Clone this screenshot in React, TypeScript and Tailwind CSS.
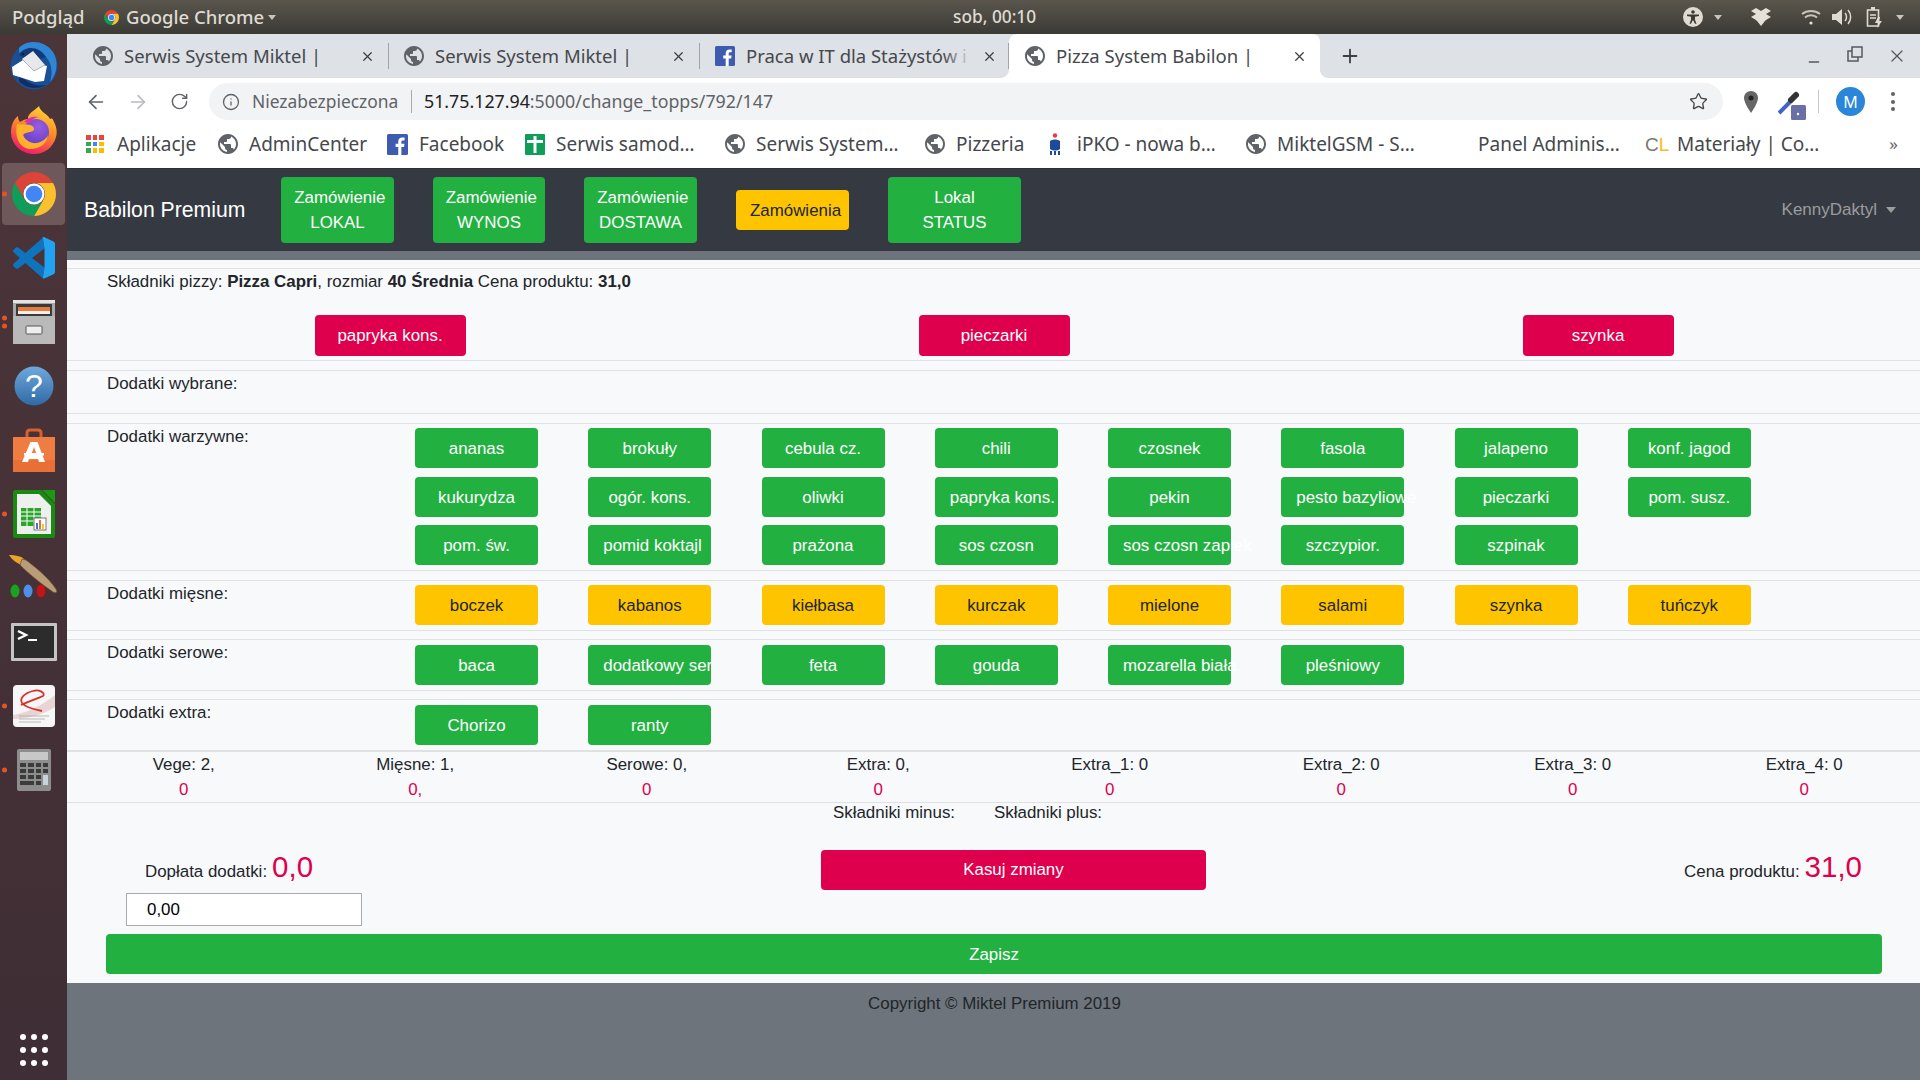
import { ArrowLeft, ArrowRight, Info, Minus, Plus, RotateCw, Star, X } from "lucide-react";

const ubuntu = "font-['Noto_Sans','Open_Sans',sans-serif]";

const warzywne = [
  "ananas", "brokuły", "cebula cz.", "chili", "czosnek", "fasola", "jalapeno", "konf. jagod",
  "kukurydza", "ogór. kons.", "oliwki", "papryka kons.", "pekin", "pesto bazyliowe", "pieczarki", "pom. susz.",
  "pom. św.", "pomid koktajl", "prażona", "sos czosn", "sos czosn zapiek", "szczypior.", "szpinak",
];
const miesne = ["boczek", "kabanos", "kiełbasa", "kurczak", "mielone", "salami", "szynka", "tuńczyk"];
const serowe = ["baca", "dodatkowy ser", "feta", "gouda", "mozarella biała", "pleśniowy"];
const extra = ["Chorizo", "ranty"];
const stats = [
  ["Vege: 2,", "0"], ["Mięsne: 1,", "0,"], ["Serowe: 0,", "0"], ["Extra: 0,", "0"],
  ["Extra_1: 0", "0"], ["Extra_2: 0", "0"], ["Extra_3: 0", "0"], ["Extra_4: 0", "0"],
];

function Globe({ size = 20 }: { size?: number }) {
  return (
    <svg width={size} height={size} viewBox="2 2 20 20" className="shrink-0">
      <path fill="#5f6368" d="M12 2C6.48 2 2 6.48 2 12s4.48 10 10 10 10-4.48 10-10S17.52 2 12 2zm-1 17.93c-3.95-.49-7-3.85-7-7.93 0-.62.08-1.21.21-1.79L9 15v1c0 1.1.9 2 2 2v1.93zm6.9-2.54c-.26-.81-1-1.39-1.9-1.39h-1v-3c0-.55-.45-1-1-1H8v-2h2c.55 0 1-.45 1-1V7h2c1.1 0 2-.9 2-2v-.41c2.93 1.19 5 4.06 5 7.41 0 2.08-.8 3.97-2.1 5.39z" />
    </svg>
  );
}

function Fb({ size = 20 }: { size?: number }) {
  return (
    <svg width={size} height={size} viewBox="0 0 20 20" className="shrink-0">
      <rect width="20" height="20" rx="1.5" fill="#3f5bb0" />
      <path fill="#fff" d="M13.7 20v-7.6h2.5l.4-3h-2.9V7.6c0-.9.3-1.4 1.5-1.4h1.5V3.5c-.3 0-1.2-.1-2.2-.1-2.2 0-3.8 1.4-3.8 3.9v2.1H8.2v3h2.5V20z" />
    </svg>
  );
}

function Chrome({ size = 44 }: { size?: number }) {
  return (
    <svg width={size} height={size} viewBox="2 2 44 44" className="shrink-0">
      <path fill="#db4437" d="M4.95 13A22 22 0 0 1 43.05 13L24 13A11 11 0 0 0 14.47 29.5Z" />
      <path fill="#fbc02d" d="M43.05 13A22 22 0 0 1 24 46L33.53 29.5A11 11 0 0 0 24 13Z" />
      <path fill="#0f9d58" d="M24 46A22 22 0 0 1 4.95 13L14.47 29.5A11 11 0 0 0 33.53 29.5Z" />
      <circle cx="24" cy="24" r="10.5" fill="#fff" />
      <circle cx="24" cy="24" r="8.3" fill="#4285f4" />
    </svg>
  );
}

function Thunderbird() {
  return (
    <svg width="48" height="50" viewBox="0 0 48 50">
      <circle cx="24" cy="25" r="23.5" fill="#1b4f94" />
      <path fill="#2f86d6" d="M9 7C17-2 35-1 43 11c6 10 4 22-3 30 3-10 2-20-6-27C27 8 18 7 9 12z" />
      <path fill="#123a78" d="M9 14c3-5 7-7 12-7 6 0 11 3 15 9L20 20z" />
      <path fill="#0f2f66" d="M9 32c6 9 15 14 27 12-8 5-20 4-27-4z" />
      <path fill="#fff" d="M2 26 13 19l17 4 7 2-3 15-9 1-22-7z" />
      <path fill="#e6e8ec" d="M12 18 23 10l12 14-11 6z" />
      <path fill="none" stroke="#9aa0a6" strokeWidth="0.8" d="M12 18l12 12 11-6" />
      <circle cx="13" cy="13" r="1.3" fill="#0b1c3c" />
    </svg>
  );
}

function Firefox() {
  return (
    <svg width="46" height="48" viewBox="0 0 46 48">
      <defs>
        <linearGradient id="fx" x1="0.7" y1="0" x2="0.3" y2="1">
          <stop offset="0" stopColor="#ffd53a" />
          <stop offset="0.45" stopColor="#ff8a26" />
          <stop offset="1" stopColor="#f0146e" />
        </linearGradient>
        <radialGradient id="fxp" cx="0.6" cy="0.3" r="0.8">
          <stop offset="0" stopColor="#9a5ce0" />
          <stop offset="1" stopColor="#5d3ec4" />
        </radialGradient>
      </defs>
      <path fill="url(#fx)" d="M28 0c1 6 9 8 11 13 2-1 3 0 3.5 2 3 5 4 11 2.500 16C42 42 33 48 23 48 10 48 0 38 0 26 0 20 2 14 7 10c0 3 1 5 2 6 3-2 6-3 8-3-1-5 6-8 11-13z" />
      <circle cx="25" cy="26" r="13" fill="url(#fxp)" />
      <path fill="#ffb12b" d="M6 18c5 1 9 0 13 1 4 1 5 4 3 6-4 2-8 1-10 4 2 5 8 9 14 8 5-1 9-4 11-8-1 9-9 14-17 14C10 43 3 33 6 18z" />
      <path fill="#e02fa0" d="M13 16c3-4 9-6 14-5-4 1-7 3-8 6z" />
    </svg>
  );
}

function VsCode() {
  return (
    <svg width="42" height="42" viewBox="0 0 100 100">
      <path fill="#0f74bd" d="M71 2 29.400 38 12.200 25c-1.600-1.200-3.800-1.100-5.300.2L1.400 30.300c-1.800 1.700-1.800 4.500 0 6.200L16.300 50 1.400 63.600c-1.800 1.700-1.800 4.500 0 6.200l5.500 5c1.500 1.300 3.700 1.400 5.300.2l17.200-13L71 98 75 72.700 45.100 50 75 27.300z" />
      <path fill="#21a3f1" d="M96.500 10.800 75.900.9c-2.400-1.200-5.200-.7-7.100 1.200L71 2l4 25.300v45.400L71 98l-2.200-.9c1.900 1.900 4.700 2.400 7.100 1.200l20.600-9.900c2.200-1 3.500-3.200 3.500-5.600V16.400c0-2.400-1.400-4.600-3.500-5.600z" />
    </svg>
  );
}

function Cabinet() {
  return (
    <svg width="42" height="44" viewBox="0 0 42 44">
      <rect x="0" y="0" width="42" height="44" rx="2" fill="#a9a9a9" />
      <rect x="0" y="0" width="42" height="3" fill="#e4e4e4" />
      <rect x="3" y="4" width="36" height="12" fill="#3a3a3a" />
      <rect x="5" y="7" width="32" height="4" fill="#e8783c" />
      <rect x="5" y="11" width="32" height="3" fill="#f4f0e8" />
      <rect x="0" y="16" width="42" height="28" fill="#b9b9b9" />
      <rect x="13" y="26" width="16" height="8" rx="1" fill="#eeeeee" stroke="#555" />
    </svg>
  );
}

function Help() {
  return (
    <svg width="40" height="40" viewBox="0 0 40 40">
      <defs>
        <linearGradient id="hp" x1="0" y1="0" x2="0" y2="1">
          <stop offset="0" stopColor="#6fa8dc" />
          <stop offset="1" stopColor="#2f6aa5" />
        </linearGradient>
      </defs>
      <circle cx="20" cy="20" r="19.500" fill="url(#hp)" />
      <text x="20" y="31" textAnchor="middle" fontSize="32" fill="#fff" fontFamily="Liberation Sans, sans-serif">?</text>
    </svg>
  );
}

function Software() {
  return (
    <svg width="42" height="44" viewBox="0 0 42 44">
      <path fill="none" stroke="#d8602f" strokeWidth="3" d="M14 12V5c0-2 1-3 3-3h8c2 0 3 1 3 3v7" />
      <rect y="9" width="42" height="35" fill="#ef7d41" />
      <rect y="32" width="42" height="12" fill="#e86f35" />
      <path fill="#fff" d="M17.500 14h7l7.500 20h-6l-1-3h-9l-1 3h-6zm3.500 5-2.500 7h5z" />
      <rect x="11" y="25" width="20" height="2.500" fill="#fff" />
    </svg>
  );
}

function Sheet() {
  return (
    <svg width="42" height="48" viewBox="0 0 42 48">
      <path fill="#1a8a12" d="M2 0h26l14 14v32c0 1-1 2-2 2H2c-1 0-2-1-2-2V2C0 1 1 0 2 0z" />
      <path fill="#eef0ee" d="M4 4h22l12 12v28H4z" />
      <path fill="#1a9a12" d="M29 0l13 13V0z" />
      <g fill="#2aa52a">
        <rect x="8" y="18" width="20" height="18" />
      </g>
      <g stroke="#fff" strokeWidth="1">
        <path d="M8 22h20M8 26h20M8 31h20M14 18v18M21 18v18" />
      </g>
      <rect x="21" y="28" width="12" height="12" fill="#fff" stroke="#777" />
      <rect x="23" y="33" width="2" height="6" fill="#2f7fd0" />
      <rect x="26" y="30" width="2" height="9" fill="#e86f35" />
      <rect x="29" y="34" width="2" height="5" fill="#f1c232" />
    </svg>
  );
}

function Brush() {
  return (
    <svg width="50" height="46" viewBox="0 0 50 46">
      <path fill="#e8a52a" d="M0 0c6 0 12 1 15 4l-3 6C8 8 3 5 0 0z" />
      <path fill="#b99d78" stroke="#6d4a2a" strokeWidth="0.7" d="M13 4l4 1c8 6 22 17 30 29 2 3 0 5-3 3C32 29 19 18 11 10z" />
      <ellipse cx="6" cy="36" rx="4.500" ry="6.500" fill="#19a31f" />
      <ellipse cx="19" cy="36" rx="4.500" ry="6.500" fill="#4f8fe8" />
      <ellipse cx="32" cy="36" rx="4.500" ry="6.500" fill="#c51414" />
    </svg>
  );
}

function Terminal() {
  return (
    <svg width="46" height="38" viewBox="0 0 46 38">
      <rect width="46" height="38" rx="1" fill="#c4c4c4" />
      <rect x="3" y="3" width="40" height="32" fill="#2c2c2c" />
      <path fill="none" stroke="#fff" strokeWidth="2.400" d="M7 8l8 4-8 4" />
      <rect x="17" y="16" width="9" height="2" fill="#fff" />
    </svg>
  );
}

function Evince() {
  return (
    <svg width="42" height="42" viewBox="0 0 42 42">
      <rect width="42" height="42" rx="4" fill="#f6f6f6" />
      <path fill="#e8d4d4" d="M0 30c14-2 30-10 42-20v12C30 30 14 34 0 34z" />
      <path fill="none" stroke="#d4312a" strokeWidth="1.800" d="M8 20c6-3 18-7 22-9 3-3-4-7-10-5C12 8 6 13 9 18c3 4 10 6 20 8" />
      <path stroke="#aaa" strokeWidth="0.8" d="M6 31h30M6 34h26M6 37h22" />
    </svg>
  );
}

function Calculator() {
  return (
    <svg width="34" height="42" viewBox="0 0 34 42">
      <rect width="34" height="42" rx="2" fill="#8d8d8d" />
      <rect x="3" y="3" width="28" height="8" fill="#c8c8c8" />
      <g fill="#3b3b3b">
        <rect x="3" y="14" width="6" height="4" /><rect x="11" y="14" width="6" height="4" /><rect x="19" y="14" width="5" height="4" /><rect x="26" y="14" width="5" height="4" />
        <rect x="3" y="20" width="6" height="4" /><rect x="11" y="20" width="6" height="4" /><rect x="19" y="20" width="5" height="4" /><rect x="26" y="20" width="5" height="4" />
        <rect x="3" y="26" width="6" height="4" /><rect x="11" y="26" width="6" height="4" /><rect x="19" y="26" width="5" height="4" />
        <rect x="3" y="32" width="14" height="4" /><rect x="19" y="32" width="5" height="4" />
      </g>
      <rect x="26" y="26" width="5" height="10" fill="#c9d4da" />
    </svg>
  );
}

function DockSlot({ dots = 0, active = false, children }: { dots?: number; active?: boolean; children: React.ReactNode }) {
  return (
    <div className="relative flex h-[64px] items-center justify-center">
      {active && <div className="absolute inset-x-[2px] inset-y-[1px] rounded bg-[#6e585a]" />}
      {dots > 0 && (
        <div className="absolute left-[2px] top-1/2 flex -translate-y-1/2 flex-col gap-[3px]">
          {Array.from({ length: dots }).map((_, i) => (
            <span key={i} className="block h-[5px] w-[5px] rounded-full bg-[#e9531f]" />
          ))}
        </div>
      )}
      <div className="relative flex items-center justify-center">{children}</div>
    </div>
  );
}

function Dock() {
  return (
    <div className="flex w-[67px] shrink-0 flex-col bg-gradient-to-b from-[#4c3539] to-[#3f2e35]">
      <DockSlot><Thunderbird /></DockSlot>
      <DockSlot><Firefox /></DockSlot>
      <DockSlot active dots={1}><Chrome /></DockSlot>
      <DockSlot><VsCode /></DockSlot>
      <DockSlot dots={2}><Cabinet /></DockSlot>
      <DockSlot><Help /></DockSlot>
      <DockSlot><Software /></DockSlot>
      <DockSlot dots={1}><Sheet /></DockSlot>
      <DockSlot><Brush /></DockSlot>
      <DockSlot><Terminal /></DockSlot>
      <DockSlot dots={1}><Evince /></DockSlot>
      <DockSlot dots={1}><Calculator /></DockSlot>
      <div className="mt-auto mb-[14px] grid grid-cols-3 justify-items-center gap-y-[7px] px-[17px]">
        {Array.from({ length: 9 }).map((_, i) => (
          <span key={i} className="h-[6px] w-[6px] rounded-full bg-white" />
        ))}
      </div>
    </div>
  );
}

function Caret({ className = "" }: { className?: string }) {
  return <span className={`inline-block h-0 w-0 border-x-[4px] border-t-[5px] border-x-transparent border-t-[#c9c5bc] ${className}`} />;
}

function TopBar() {
  return (
    <div className={`flex h-[34px] items-center bg-gradient-to-b from-[#5a564d] to-[#3b3a35] text-[18.500px] font-medium text-[#dfdbd2] ${ubuntu}`}>
      <div className="flex w-[953px] shrink-0 items-center">
        <span className="ml-[12px] w-[92px]">Podgląd</span>
        <Chrome size={15} />
        <span className="ml-[7px] whitespace-nowrap">Google Chrome</span>
        <Caret className="ml-[4px]" />
      </div>
      <span className="whitespace-nowrap text-[17.300px]">sob, 00:10</span>
      <div className="ml-auto flex items-center pr-[16px]">
        <svg width="20" height="20" viewBox="0 0 20 20">
          <circle cx="10" cy="10" r="10" fill="#dfdbd2" />
          <circle cx="10" cy="5" r="1.800" fill="#3b3a35" />
          <path fill="#3b3a35" d="M4 7.500h12v1.500l-4 .8v3l1.500 4h-1.500L10 13l-2 3.800H6.500l1.500-4v-3L4 9z" />
        </svg>
        <Caret className="ml-[11px]" />
        <svg width="20" height="18" viewBox="0 0 20 18" className="ml-[29px]">
          <path fill="#e6e1d8" d="M0 3l5-3 5 3 5-3 5 3-5 3 5 3-5 3-1 1-4 5-4-5-1-1-5-3 5-3z" />
        </svg>
        <svg width="20" height="16" viewBox="0 0 20 16" fill="none" stroke="#c9c5bc" strokeWidth="2" className="ml-[30px]">
          <path d="M1 5c5-4 13-4 18 0M4 8.500c3-3 9-3 12 0" />
          <circle cx="10" cy="14" r="1.600" fill="#e6e1d8" stroke="none" />
        </svg>
        <svg width="20" height="18" viewBox="0 0 20 18" className="ml-[11px]">
          <path fill="#dfdbd2" d="M0 6h4l6-5v16l-6-5H0z" />
          <path fill="none" stroke="#dfdbd2" strokeWidth="1.500" d="M13 5c2 2 2 6 0 8M16 2c3.500 4 3.500 10 0 14" />
        </svg>
        <svg width="18" height="22" viewBox="0 0 18 22" className="ml-[14px]">
          <path fill="none" stroke="#dfdbd2" strokeWidth="1.600" d="M1.500 4h11v16h-11z" />
          <rect x="5" y="1" width="4" height="3" fill="#dfdbd2" />
          <path stroke="#dfdbd2" strokeWidth="1.500" d="M4 9h6M4 12h6" />
          <path fill="#dfdbd2" d="M12 11l-3 6h3l-1 5 5-7h-3l1-4z" />
        </svg>
        <Caret className="ml-[12px]" />
      </div>
    </div>
  );
}

function Tab({ title, fb = false, active = false, fade = false, className = "w-[311px]" }: { title: string; fb?: boolean; active?: boolean; fade?: boolean; className?: string }) {
  return (
    <div className={`relative flex h-full items-center ${className} ${active ? "rounded-t-[8px] bg-white pl-[16px]" : "pl-[15px]"}`}>
      {fb ? <Fb /> : <Globe />}
      <div className={`relative ml-[11px] w-[226px] overflow-hidden whitespace-nowrap text-[18.500px] text-[#45484c] ${ubuntu}`}>
        {title}
        {fade && <div className="absolute inset-y-0 right-0 w-[30px] bg-gradient-to-r from-transparent to-[#dee1e6]" />}
      </div>
      <X size={15} strokeWidth={2} className="ml-[10px] shrink-0 text-[#3c4043]" />
      {!active && <div className="absolute right-0 top-[9px] h-[26px] w-px bg-[#a0a4a8]" />}
      {active && (
        <>
          <svg width="8" height="8" viewBox="0 0 8 8" className="absolute bottom-0 -left-[8px]"><path fill="#fff" d="M8 0v8H0c4 0 8-4 8-8z" /></svg>
          <svg width="8" height="8" viewBox="0 0 8 8" className="absolute bottom-0 -right-[8px]"><path fill="#fff" d="M0 0v8h8C4 8 0 4 0 0z" /></svg>
        </>
      )}
    </div>
  );
}

function TabStrip() {
  return (
    <div className="flex h-[44px] items-center bg-[#dee1e6] pl-[11px]">
      <Tab title="Serwis System Miktel |" />
      <Tab title="Serwis System Miktel |" />
      <Tab title="Praca w IT dla Stażystów i" fb fade className="w-[309px]" />
      <Tab title="Pizza System Babilon |" active />
      <Plus size={22} strokeWidth={2} className="ml-[19px] text-[#3c4043]" />
      <div className="ml-auto flex items-center pr-[13px]">
        <Minus size={16} className="mt-[12px] text-[#55585c]" />
        <svg width="16" height="16" viewBox="0 0 16 16" fill="none" stroke="#55585c" strokeWidth="1.500" className="ml-[25px] -mt-[4px]">
          <path d="M5 1h10v10H5zM5 5H1v10h10v-4" />
        </svg>
        <X size={20} strokeWidth={1.500} className="ml-[24px] text-[#55585c]" />
      </div>
    </div>
  );
}

function Toolbar() {
  return (
    <div className="flex h-[42px] items-end bg-white pl-[18px]">
      <div className="flex h-[37px] items-center">
        <ArrowLeft size={22} strokeWidth={1.800} className="text-[#5f6368]" />
        <ArrowRight size={22} strokeWidth={1.800} className="ml-[20px] text-[#b9bbbe]" />
        <RotateCw size={19} strokeWidth={1.800} className="ml-[21px] text-[#5f6368]" />
      </div>
      <div className={`ml-[20px] flex h-[37px] w-[1514px] items-center rounded-full bg-[#f1f3f4] pl-[13px] text-[17.400px] ${ubuntu}`}>
        <Info size={18} strokeWidth={1.700} className="text-[#5f6368]" />
        <span className="ml-[12px] w-[148px] whitespace-nowrap text-[#5f6368]">Niezabezpieczona</span>
        <span className="ml-[11px] h-[23px] w-px bg-[#a8abae]" />
        <span className="ml-[12px] whitespace-nowrap text-[17.800px] text-[#5f6368]"><span className="text-[#202124]">51.75.127.94</span>:5000/change_topps/792/147</span>
        <Star size={19} strokeWidth={1.700} className="ml-auto mr-[15px] text-[#45484c]" />
      </div>
      <div className="flex h-[37px] items-center">
        <svg width="14" height="22" viewBox="0 0 14 22" className="ml-[21px]">
          <path fill="#666" d="M7 0C3 0 0 3 0 7c0 5 7 15 7 15s7-10 7-15c0-4-3-7-7-7z" />
          <circle cx="7" cy="7" r="2.500" fill="#222" />
        </svg>
        <svg width="28" height="30" viewBox="0 0 28 30" className="ml-[20px] mt-[6px]">
          <path stroke="#3f63c8" strokeWidth="4" d="M1 23 14 10" />
          <path stroke="#333" strokeWidth="6" d="M13 10l5-5" strokeLinecap="round" />
          <rect x="13" y="15" width="15" height="15" rx="1.500" fill="#6a6fa8" />
          <circle cx="20" cy="24" r="1.200" fill="#fff" />
        </svg>
        <span className="ml-[12px] h-[23px] w-px bg-[#c4c6c9]" />
        <span className="ml-[17px] flex h-[29px] w-[29px] items-center justify-center rounded-full bg-[#2a86d8] font-['Noto_Sans',sans-serif] text-[16px] text-white">M</span>
        <div className="ml-[26px] flex flex-col gap-[3.500px]">
          <span className="h-[4px] w-[4px] rounded-full bg-[#5f6368]" />
          <span className="h-[4px] w-[4px] rounded-full bg-[#5f6368]" />
          <span className="h-[4px] w-[4px] rounded-full bg-[#5f6368]" />
        </div>
      </div>
    </div>
  );
}

function Mark({ title, children, iconClass, width }: { title: string; children?: React.ReactNode; iconClass: string; width: string }) {
  return (
    <div className={`flex shrink-0 items-center ${width}`}>
      <div className={`flex shrink-0 items-center ${iconClass}`}>{children}</div>
      <span className="whitespace-nowrap">{title}</span>
    </div>
  );
}

function Bookmarks() {
  return (
    <div className={`flex h-[48px] items-center bg-white pl-[19px] text-[19px] text-[#45484c] ${ubuntu}`}>
      <Mark title="Aplikacje" iconClass="w-[31px]" width="w-[132px]">
        <div className="grid w-[18px] grid-cols-3 gap-[2px]">
          {["#e8453c", "#e8453c", "#e8453c", "#34a853", "#4285f4", "#fbbc05", "#34a853", "#fbbc05", "#fbbc05"].map((c, i) => (
            <span key={i} className="h-[4.500px] w-[4.500px]" style={{ backgroundColor: c }} />
          ))}
        </div>
      </Mark>
      <Mark title="AdminCenter" iconClass="w-[31px]" width="w-[169px]"><Globe /></Mark>
      <Mark title="Facebook" iconClass="w-[32px]" width="w-[138px]"><Fb size={21} /></Mark>
      <Mark title="Serwis samod…" iconClass="w-[31px]" width="w-[200px]">
        <svg width="20" height="21" viewBox="0 0 20 21"><rect width="20" height="21" rx="1" fill="#0f9d58" /><path fill="#fff" d="M8.500 2h3v4H18v3h-6.500v10h-3V9H2V6h6.500z" /></svg>
      </Mark>
      <Mark title="Serwis System…" iconClass="w-[31px]" width="w-[200px]"><Globe /></Mark>
      <Mark title="Pizzeria" iconClass="w-[31px]" width="w-[120px]"><Globe /></Mark>
      <Mark title="iPKO - nowa b…" iconClass="w-[32px]" width="w-[201px]">
        <svg width="16" height="22" viewBox="0 0 16 22" className="ml-[2px]"><circle cx="8" cy="2.500" r="2.200" fill="#e04040" /><path fill="#1e4a9a" d="M3 8c3-2 7-2 10 0v8c-3 2-7 2-10 0z" /><path stroke="#1e4a9a" strokeWidth="2" d="M4 18v4M8 18v4M12 18v4" /></svg>
      </Mark>
      <Mark title="MiktelGSM - S…" iconClass="w-[31px]" width="w-[232px]"><Globe /></Mark>
      <Mark title="Panel Adminis…" iconClass="w-[0px]" width="w-[167px]" />
      <div className="flex w-[32px] items-baseline font-['Liberation_Sans',sans-serif] text-[19px] leading-none">
        <span className="text-[#777]">C</span><span className="text-[#f5bd1f]">L</span>
      </div>
      <span className="whitespace-nowrap">Materiały | Co…</span>
      <span className="ml-[70px] text-[17px] text-[#5f6368]">»</span>
    </div>
  );
}

function Btn({ label, color }: { label: string; color: "green" | "yellow" }) {
  const cls = color === "green" ? "bg-[#22b140] text-white" : "bg-[#fec400] text-[#212529]";
  return <div className={`h-[40px] whitespace-nowrap rounded-[4px] px-[15px] text-center leading-[41px] ${cls}`}>{label}</div>;
}

function AddonRow({ label, items, color = "green", className, gridClass = "pt-[4px]" }: { label: string; items: string[]; color?: "green" | "yellow"; className: string; gridClass?: string }) {
  return (
    <div className={`flex border-y border-[#dfe1e5] ${className}`}>
      <div className="w-[348px] shrink-0 pl-[40px]">{label}</div>
      <div className={`grid content-start grid-cols-[repeat(8,123px)] gap-x-[50.250px] gap-y-[8.600px] ${gridClass}`}>
        {items.map((t) => <Btn key={t} label={t} color={color} />)}
      </div>
    </div>
  );
}

function NavBtn({ top, bottom, className }: { top: string; bottom: string; className: string }) {
  return (
    <div className={`h-[66px] shrink-0 whitespace-nowrap rounded-[4px] bg-[#22b140] pt-[8px] text-center leading-[25px] text-white ${className}`}>
      <div>{top}</div>
      <div>{bottom}</div>
    </div>
  );
}

function Page() {
  return (
    <div className="flex flex-1 flex-col bg-[#6d747b] font-['Liberation_Sans',sans-serif] text-[16.900px] leading-[25.500px] text-[#212529]">
      <nav className="flex h-[83px] items-center border-t border-[#2d3238] bg-[#353a42] pl-[17px]">
        <span className="w-[161px] whitespace-nowrap text-[21.200px] text-white">Babilon Premium</span>
        <NavBtn top="&nbsp;Zamówienie" bottom="LOKAL" className="ml-[36px] w-[113px]" />
        <NavBtn top="&nbsp;Zamówienie" bottom="WYNOS" className="ml-[39px] w-[112px]" />
        <NavBtn top="&nbsp;Zamówienie" bottom="DOSTAWA" className="ml-[39px] w-[113px]" />
        <div className="ml-[39px] h-[40px] w-[113px] whitespace-nowrap rounded-[4px] bg-[#fec400] pl-[14px] leading-[41px] text-[#212529]">Zamówienia</div>
        <NavBtn top="Lokal" bottom="STATUS" className="ml-[39px] w-[133px]" />
        <span className="ml-auto whitespace-nowrap text-[17px] text-[#9a9c9e]">KennyDaktyl</span>
        <span className="ml-[9px] mr-[24px] h-0 w-0 border-x-[5px] border-t-[6px] border-x-transparent border-t-[#9a9c9e]" />
      </nav>
      <div className="h-[9px] shrink-0" />
      <main className="flex flex-col bg-[#f8f9fb] pt-[8px]">
        <div className="h-[93px] border-y border-[#dfe1e5]">
          <div className="pl-[40px]">
            Składniki pizzy: <b>Pizza Capri</b>, rozmiar <b>40 Średnia</b> Cena produktu: <b>31,0</b>
          </div>
          <div className="mt-[20px] grid grid-cols-3 justify-items-center pl-[21px] pr-[20px]">
            {["papryka kons.", "pieczarki", "szynka"].map((t) => (
              <div key={t} className="h-[41px] w-[151px] rounded-[4px] bg-[#de004c] text-center leading-[41px] text-white">{t}</div>
            ))}
          </div>
        </div>
        <div className="mt-[9px] h-[44px] border-y border-[#dfe1e5] pl-[40px]">Dodatki wybrane:</div>
        <AddonRow label="Dodatki warzywne:" items={warzywne} className="mt-[9px] h-[148px]" />
        <AddonRow label="Dodatki mięsne:" items={miesne} color="yellow" className="mt-[9px] h-[51px]" />
        <AddonRow label="Dodatki serowe:" items={serowe} gridClass="pt-[5px]" className="mt-[8px] h-[52px]" />
        <AddonRow label="Dodatki extra:" items={extra} gridClass="pt-[5px]" className="mt-[8px] h-[53px] border-b-2" />
        <div className="grid grid-cols-8 border-b border-[#dfe1e5] pl-[1px] text-center leading-[25px]">
          {stats.map(([a, b]) => (
            <div key={a}>
              <div>{a}</div>
              <div className="text-[#de004c]">{b}</div>
            </div>
          ))}
        </div>
        <div className="-mt-[3px] flex pl-[766px]">
          <span>Składniki minus:</span>
          <span className="ml-[39px]">Składniki plus:</span>
        </div>
        <div className="mt-[24px] flex items-start">
          <div className="ml-[59px] flex w-[236px] flex-col">
            <div className="flex h-[43px] items-baseline whitespace-nowrap pl-[19px]">
              <span>Dopłata dodatki:</span>
              <span className="ml-[5px] text-[29.500px] leading-[34px] text-[#de004c]">0,0</span>
            </div>
            <div className="h-[33px] border border-[#aaaaaa] bg-white pl-[20px] leading-[31px] text-black">0,00</div>
          </div>
          <div className="ml-[459px] h-[40px] w-[385px] rounded-[4px] bg-[#de004c] text-center leading-[40px] text-white">Kasuj zmiany</div>
          <div className="ml-auto flex items-baseline whitespace-nowrap pr-[58px]">
            <span>Cena produktu:</span>
            <span className="ml-[5px] text-[29.500px] leading-[34px] text-[#de004c]">31,0</span>
          </div>
        </div>
        <div className="mb-[9px] ml-[39px] mr-[38px] mt-[8px] h-[40px] rounded-[4px] bg-[#22b140] text-center leading-[41px] text-white">Zapisz</div>
      </main>
      <footer className="pl-[2px] pt-[8px] text-center">Copyright © Miktel Premium 2019</footer>
    </div>
  );
}

export default function App() {
  return (
    <div className="flex h-[1080px] w-[1920px] flex-col overflow-hidden">
      <TopBar />
      <div className="flex flex-1 overflow-hidden">
        <Dock />
        <div className="flex flex-1 flex-col overflow-hidden">
          <TabStrip />
          <Toolbar />
          <Bookmarks />
          <Page />
        </div>
      </div>
    </div>
  );
}
